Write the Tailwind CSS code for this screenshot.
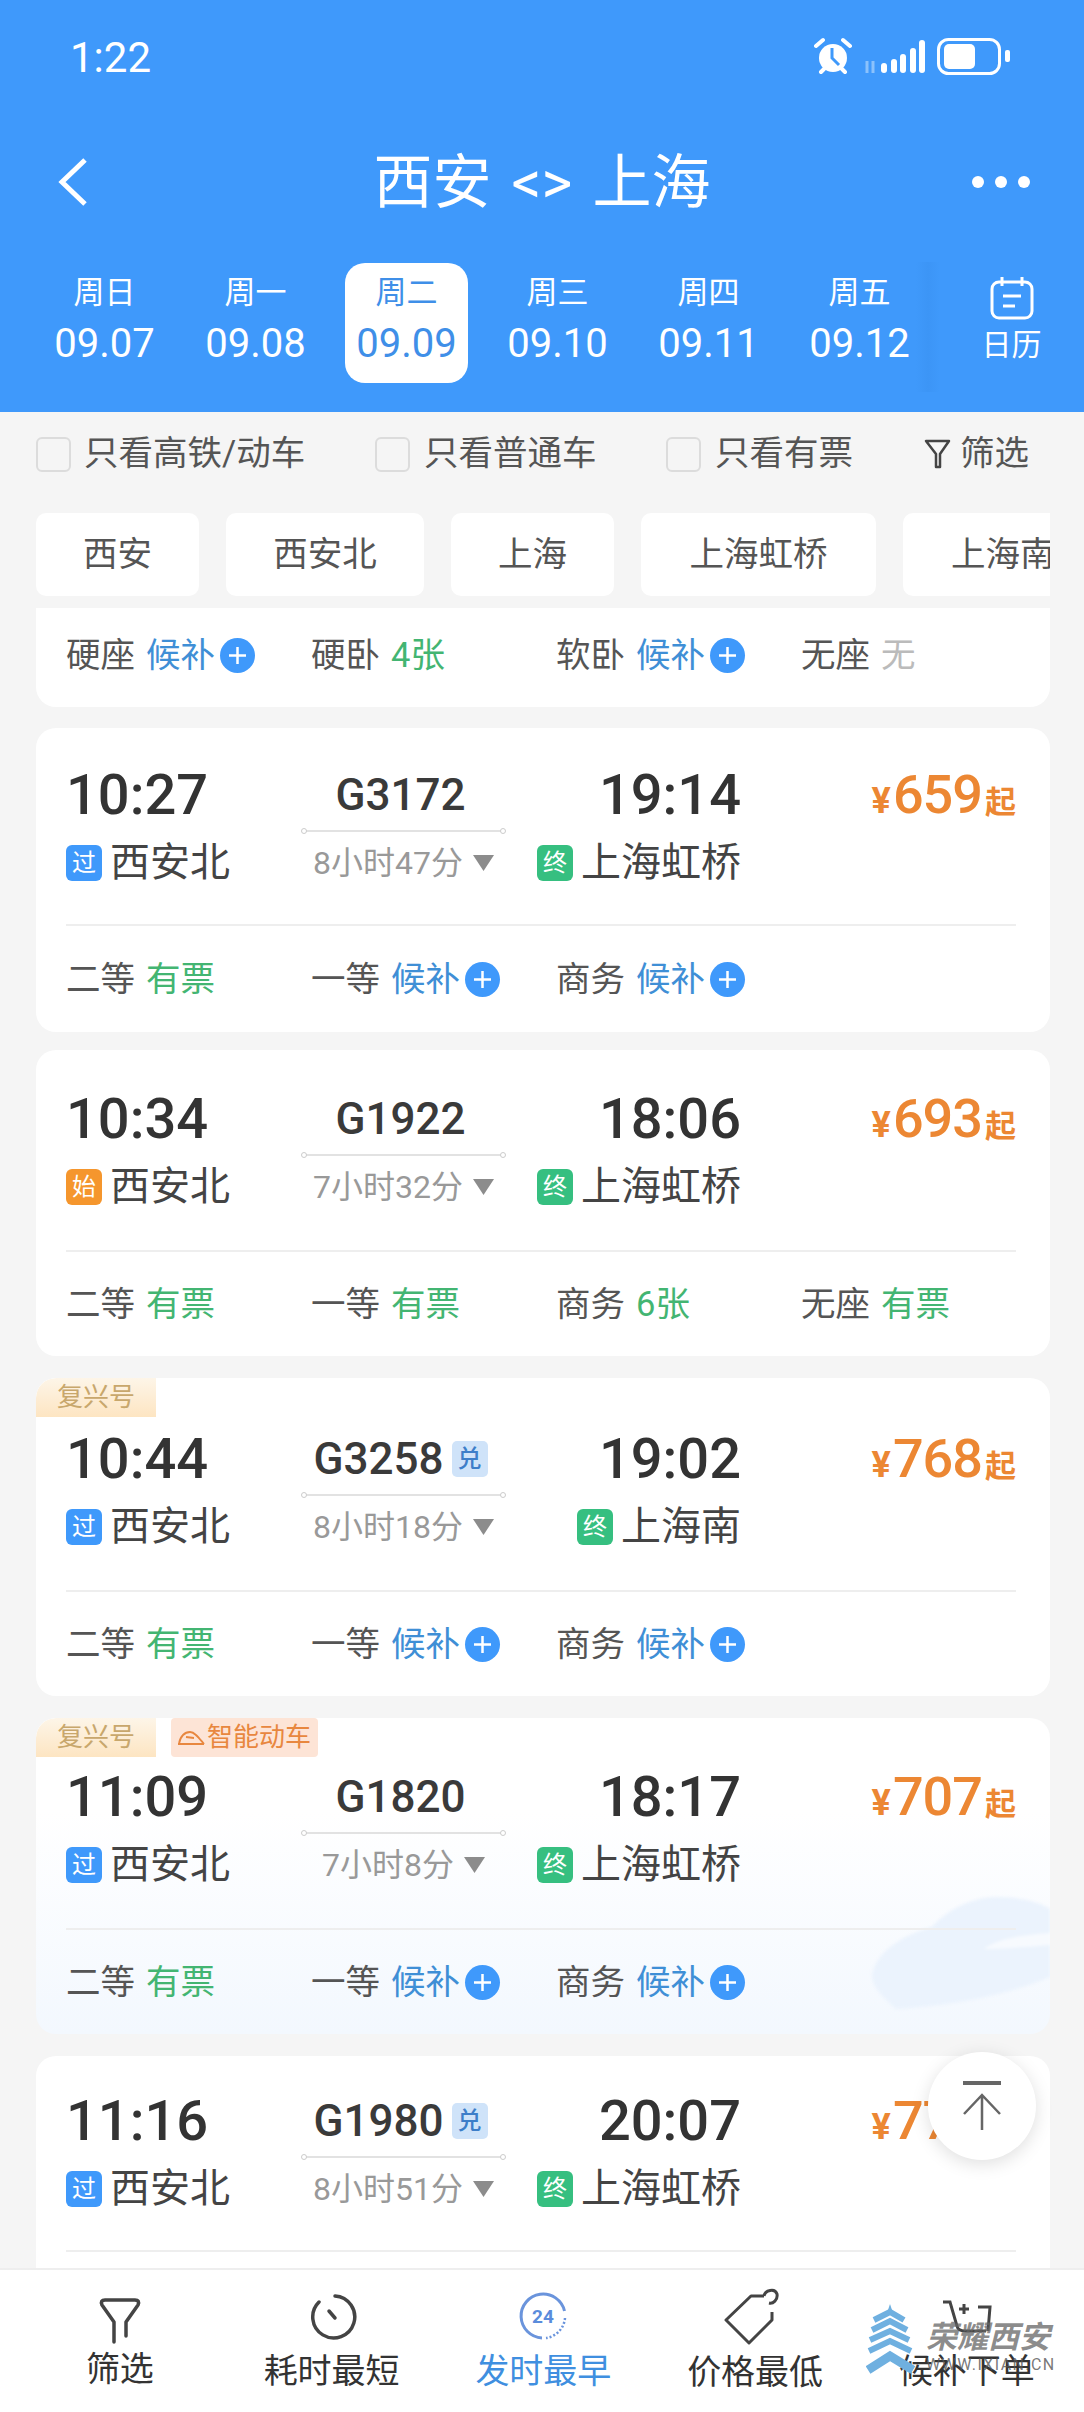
<!DOCTYPE html>
<html>
  <head>
    <meta charset="utf-8" />
    <title>西安 上海</title>
    <script src="https://cdn.jsdelivr.net/npm/@tailwindcss/browser@4"></script>
  </head>
  <body class="bg-[#f5f5f5]">
    <div class="relative w-[1084px] h-[2412px] overflow-hidden flex flex-col bg-[#f5f5f5] text-[#444] font-['Roboto','Noto_Sans_CJK_SC',sans-serif]">
      <!-- Blue header -->
      <header class="h-[412px] shrink-0 bg-[#3f99fb] text-white">
        <div class="h-[114px] flex items-center justify-between pl-[70px] pr-[74px]">
          <span class="text-[42px]">1:22</span>
          <svg class="w-[196px] h-[40px]" viewBox="814 36 196 40" fill="none">
            <circle cx="833" cy="57" r="14" fill="#fff" />
            <path d="M832 47v10l7 7" stroke="#3f99fb" stroke-width="3" />
            <path d="M816 45l7-6M850 45l-7-6M821 71l3-3M845 71l-3-3" stroke="#fff" stroke-width="4" stroke-linecap="round" />
            <path d="M867 60v12M873 72V60" stroke="#fff" stroke-opacity=".4" stroke-width="3" />
            <g fill="#fff">
              <rect x="881" y="62" width="6" height="10" rx="3" />
              <rect x="891" y="58" width="6" height="14" rx="3" />
              <rect x="900" y="53" width="6" height="19" rx="3" />
              <rect x="910" y="47" width="6" height="25" rx="3" />
              <rect x="919" y="39" width="6" height="33" rx="3" />
            </g>
            <rect x="938.5" y="38.5" width="61" height="34" rx="10" stroke="#fff" stroke-width="3" />
            <rect x="944" y="43" width="31" height="25" rx="5" fill="#fff" />
            <rect x="1005" y="49" width="5" height="12" rx="2" fill="#fff" />
          </svg>
        </div>
        <div class="mt-[22px] h-[92px] grid grid-cols-[1fr_auto_1fr] items-center">
          <div class="pl-[57px]">
            <svg class="w-[31px] h-[48px]" viewBox="0 0 31 48" fill="none" stroke="#fff" stroke-width="5"><path d="M28 2L5 24l23 22" /></svg>
          </div>
          <div class="text-[59px] leading-none whitespace-nowrap">西安<span class="mx-[20px]">&lt;&gt;</span>上海</div>
          <div class="flex justify-end gap-[11px] pr-[54px]">
            <span class="w-[12px] h-[12px] rounded-full bg-white"></span>
            <span class="w-[12px] h-[12px] rounded-full bg-white"></span>
            <span class="w-[12px] h-[12px] rounded-full bg-white"></span>
          </div>
        </div>
        <div class="mt-[35px] pl-[29px] flex">
          <div id="dates" class="flex"></div>
          <div class="w-[158px] pl-[4px] flex flex-col items-center">
            <svg class="mt-[13px] w-[44px] h-[44px]" viewBox="0 0 44 44" fill="none" stroke="#fff" stroke-width="3">
              <rect x="2" y="6" width="40" height="36" rx="7" />
              <path d="M12 1v9M32 1v9M13 20h18M13 30h12" />
            </svg>
            <span class="mt-[5px] text-[30px] leading-[40px]">日历</span>
          </div>
        </div>
      </header>
      <div class="absolute left-[916px] top-[262px] w-[24px] h-[130px] bg-gradient-to-r from-[#3f99fb] via-[#3c95f6] to-[#3f99fb]"></div>

      <!-- Filters -->
      <div class="h-[84px] shrink-0 pl-[36px] flex items-center text-[34.5px] text-[#555]">
        <span class="w-[35px] h-[35px] rounded-[6px] border-2 border-[#dcdcdc]"></span>
        <span class="ml-[13px] w-[291px]">只看高铁/动车</span>
        <span class="w-[35px] h-[35px] rounded-[6px] border-2 border-[#dcdcdc]"></span>
        <span class="ml-[14px] w-[242px]">只看普通车</span>
        <span class="w-[35px] h-[35px] rounded-[6px] border-2 border-[#dcdcdc]"></span>
        <span class="ml-[14px] w-[209px]">只看有票</span>
        <svg class="w-[27px] h-[30px] mr-[9px]" viewBox="0 0 27 30" fill="none" stroke="#444" stroke-width="2.5" stroke-linejoin="round">
          <path d="M2 2h23l-9 13v13h-4V15z" />
        </svg>
        <span>筛选</span>
      </div>

      <!-- Stations and trains -->
      <main class="flex-1 min-h-0 overflow-hidden pl-[36px] pr-[34px]">
        <div class="mt-[17px] h-[83px] flex gap-[27px] overflow-hidden text-[34.5px] text-[#555]">
          <div class="w-[163px] shrink-0 rounded-[10px] bg-white flex items-center justify-center">西安</div>
          <div class="w-[198px] shrink-0 rounded-[10px] bg-white flex items-center justify-center">西安北</div>
          <div class="w-[163px] shrink-0 rounded-[10px] bg-white flex items-center justify-center">上海</div>
          <div class="w-[235px] shrink-0 rounded-[10px] bg-white flex items-center justify-center">上海虹桥</div>
          <div class="w-[200px] shrink-0 rounded-[10px] bg-white pl-[48px] flex items-center whitespace-nowrap">上海南</div>
        </div>
        <div class="mt-[12px] h-[99px] rounded-b-[20px] bg-white pl-[30px] pt-[25px]">
          <div id="partialSeats" class="grid grid-cols-[245px_245px_245px_auto]"></div>
        </div>
        <div id="trains"></div>
      </main>

      <!-- Bottom sort bar -->
      <nav class="h-[144px] shrink-0 pl-[14px] bg-white border-t-2 border-[#eeeeee] grid grid-cols-[repeat(5,211.75px)] text-[34px] text-[#333]">
        <div class="flex flex-col items-center">
          <svg class="mt-[28px] w-[44px] h-[46px]" viewBox="0 0 44 46" fill="none" stroke="#444" stroke-width="3.5" stroke-linejoin="round" stroke-linecap="round">
            <path d="M16 44V24L4 7Q2 2 7 2H37Q42 2 40 7L28 24V38" />
          </svg>
          <span class="mt-[2px] leading-[46px]">筛选</span>
        </div>
        <div class="flex flex-col items-center">
          <svg class="mt-[22px] ml-[4px] w-[48px] h-[48px]" viewBox="0 0 48 48" fill="none" stroke="#444" stroke-width="3.5" stroke-linecap="round">
            <path d="M25 4a21 21 0 1 1-16 6" />
            <path d="M19 19l6 7" />
          </svg>
          <span class="mt-[8px] leading-[46px]">耗时最短</span>
        </div>
        <div class="flex flex-col items-center text-[#3f8fe0]">
          <svg class="mt-[21px] w-[50px] h-[50px]" viewBox="0 0 50 50" fill="none">
            <path d="M46.500 20A22 22 0 1 0 24 47" stroke="#6a94dc" stroke-width="3" />
            <path d="M47 27A22 22 0 0 1 28 47" stroke="#6a94dc" stroke-width="2.500" stroke-dasharray="2 2" />
            <text x="25" y="32" text-anchor="middle" font-size="19" font-weight="700" fill="#5a8cdc">24</text>
          </svg>
          <span class="mt-[7px] leading-[46px]">发时最早</span>
        </div>
        <div class="flex flex-col items-center">
          <svg class="mt-[18px] mr-[6px] w-[66px] h-[60px]" viewBox="0 0 66 60" fill="none" stroke="#444" stroke-width="3" stroke-linejoin="round">
            <path d="M45 8H32L7 32l23 23 23-23v-8" />
            <path d="M45 8c1-6 11-8 13-2 1 6-4 10-8 9" />
          </svg>
          <span class="leading-[46px] mt-[1px]">价格最低</span>
        </div>
        <div class="flex flex-col items-center">
          <svg class="mt-[28px] w-[50px] h-[38px]" viewBox="0 0 50 38" fill="none" stroke="#444" stroke-width="3">
            <path d="M1 4h7l7 24q1 5 8 5h21M46 33l2-24V9H36" />
            <path d="M22 6v10M17 11h10" />
          </svg>
          <span class="mt-[12px] leading-[46px]">候补下单</span>
        </div>
      </nav>

      <!-- Floating back to top -->
      <button class="absolute left-[928px] top-[2052px] w-[108px] h-[108px] rounded-full bg-white shadow-[0_4px_18px_rgba(0,0,0,0.13)] flex items-center justify-center">
        <svg class="w-[40px] h-[50px]" viewBox="0 0 40 50" fill="none" stroke="#666">
          <path d="M1 2h38" stroke-width="4" />
          <path d="M20 49V14M2 33l18-19 18 19" stroke-width="2.500" />
        </svg>
      </button>

      <!-- Watermark -->
      <svg class="absolute left-[866px] top-[2304px] w-[50px] h-[72px]" viewBox="0 0 50 72" fill="none" stroke="#6fb0e0" stroke-width="6">
        <path d="M24 0l-2 6h4z" fill="#6fb0e0" stroke="none" />
        <path d="M8 16l16-8 14 8M6 26l18-9 17 9M4 36l20-9 19 9M3 47l21-10 21 10" />
        <path d="M2 66l22-14 23 14" stroke-width="9" />
      </svg>
      <div class="absolute left-[926px] top-[2316px] text-[31px] leading-[44px] font-bold italic whitespace-nowrap text-[#666]/75">荣耀西安</div>
      <div class="absolute left-[926px] top-[2355px] text-[16px] leading-[20px] tracking-[1.4px] whitespace-nowrap text-[#555]/80">WWW.IXIAN.CN</div>
    </div>

    <script>
      const dates = [
        ["周日", "09.07"],
        ["周一", "09.08"],
        ["周二", "09.09", true],
        ["周三", "09.10"],
        ["周四", "09.11"],
        ["周五", "09.12"],
      ];
      document.getElementById("dates").innerHTML = dates
        .map(
          ([week, day, active]) => `
          <div class="w-[151px] flex justify-center">
            <div class="w-[123px] h-[120px] rounded-[20px] pt-[10px] flex flex-col items-center ${active ? "bg-white text-[#3f8fe8]" : ""}">
              <span class="h-[40px] text-[31px] leading-[40px]">${week}</span>
              <span class="mt-[10px] h-[42px] text-[40px] leading-[42px]">${day}</span>
            </div>
          </div>`
        )
        .join("");

      // status: wait = 候补 + plus, ok = green, none = grey
      function seat([label, status, text]) {
        let value = "";
        if (status === "wait") {
          value = `<span class="text-[#3f8fd6]">候补</span>
            <span class="ml-[5px] w-[35px] h-[35px] rounded-full bg-[#3f99fb] flex items-center justify-center">
              <svg class="w-[19px] h-[19px]" viewBox="0 0 19 19" stroke="#fff" stroke-width="2.500"><path d="M9.500 1v17M1 9.500h17" /></svg>
            </span>`;
        } else if (status === "ok") {
          value = `<span class="text-[#43b572]">${text}</span>`;
        } else {
          value = `<span class="text-[#bbbbbb]">${text}</span>`;
        }
        return `<div class="flex items-center text-[34.5px] leading-[44px] text-[#555]"><span class="mr-[11px]">${label}</span>${value}</div>`;
      }

      document.getElementById("partialSeats").innerHTML = [
        ["硬座", "wait"],
        ["硬卧", "ok", "4张"],
        ["软卧", "wait"],
        ["无座", "none", "无"],
      ]
        .map(seat)
        .join("");

      const usual = [
        ["二等", "ok", "有票"],
        ["一等", "wait"],
        ["商务", "wait"],
      ];
      const trains = [
        { box: "mt-[21px] pt-[34px] bg-white", rule: "mt-[30px] h-[108px]", from: "10:27", no: "G3172", to: "19:14", fromBadge: "过", fromName: "西安北", toName: "上海虹桥", time: "8小时47分", price: "659", seats: usual },
        {
          box: "mt-[18px] pt-[36px] bg-white", rule: "mt-[32px] h-[106px]", from: "10:34", no: "G1922", to: "18:06", fromBadge: "始", fromName: "西安北", toName: "上海虹桥", time: "7小时32分", price: "693",
          seats: [["二等", "ok", "有票"], ["一等", "ok", "有票"], ["商务", "ok", "6张"], ["无座", "ok", "有票"]],
        },
        { box: "mt-[22px] pt-[48px] bg-white", rule: "mt-[32px] h-[106px]", fx: true, from: "10:44", no: "G3258", dui: true, to: "19:02", fromBadge: "过", fromName: "西安北", toName: "上海南", time: "8小时18分", price: "768", seats: usual },
        { box: "mt-[22px] pt-[46px] bg-gradient-to-b from-white from-30% to-[#f3f8fe]", rule: "mt-[32px] h-[106px]", fx: true, smart: true, from: "11:09", no: "G1820", to: "18:17", fromBadge: "过", fromName: "西安北", toName: "上海虹桥", time: "7小时8分", price: "707", seats: usual },
        { box: "mt-[22px] pt-[32px] bg-white", rule: "mt-[30px] h-[108px]", from: "11:16", no: "G1980", dui: true, to: "20:07", fromBadge: "过", fromName: "西安北", toName: "上海虹桥", time: "8小时51分", price: "771", seats: [] },
      ];

      document.getElementById("trains").innerHTML = trains
        .map(
          (t) => `
        <div class="relative overflow-hidden rounded-[20px] pl-[30px] pr-[34px] ${t.box}">
          ${t.fx ? `<div class="absolute left-0 top-0 w-[120px] h-[39px] rounded-tl-[20px] bg-gradient-to-b from-[#fdf5e8] to-[#fde5c2] text-[#c8a76c] text-[26px] leading-[39px] text-center">复兴号</div>` : ""}
          ${t.smart ? `<div class="absolute left-[135px] top-0 w-[147px] h-[39px] rounded-[4px] bg-[#fde4d6] text-[#e8873f] text-[26px] leading-[39px] flex items-center pl-[6px]">
              <svg class="w-[28px] h-[14px] mr-[2px]" viewBox="0 0 28 14" fill="none" stroke="#e8873f" stroke-width="1.800"><path d="M1 13h26M2 13C3 5 8 1 13 1c5 0 9 6 14 12M9 6l8 1" /></svg>智能动车</div>` : ""}
          ${t.smart ? `<svg class="absolute right-0 bottom-[25px] w-[178px] h-[112px] blur-[1.5px]" viewBox="0 0 178 112"><path d="M0 78C4 55 30 38 60 30 70 18 95 0 125 0c25 0 45 6 53 12v68c-38 16-88 28-154 32C10 100 0 90 0 78z" fill="#ebf3fd" /><path d="M112 52c13-10 38-14 66-16v12c-23 2-48 4-66 4z" fill="#f7fafe" /></svg>` : ""}
          <div class="relative grid grid-cols-[238px_199px_238px_1fr] h-[64px] items-center">
            <div class="text-[56px] leading-[64px] font-medium text-[#333]">${t.from}</div>
            <div class="pr-[6px] flex items-center justify-center gap-[8px] text-[44px] font-medium text-[#3a3a3a]">
              <span>${t.no}</span>
              ${t.dui ? `<span class="w-[36px] h-[36px] rounded-[5px] bg-[#cfe3f9] text-[#3d7ec9] text-[24px] leading-[36px] text-center">兑</span>` : ""}
            </div>
            <div class="text-right text-[56px] leading-[64px] font-medium text-[#333]">${t.to}</div>
            <div class="flex items-baseline justify-end text-[#ec8733] font-medium">
              <span class="text-[36px] font-bold mr-[2px]">¥</span><span class="text-[54px] leading-[64px] tracking-[-1px]">${t.price}</span><span class="ml-[3px] text-[31px] font-bold">起</span>
            </div>
          </div>
          <div class="relative mt-[4px] grid grid-cols-[238px_199px_238px] h-[64px] items-center">
            <div class="pt-[2px] flex items-center gap-[8px] text-[40px] text-[#444]">
              <span class="w-[36px] h-[36px] rounded-[6px] ${t.fromBadge === "始" ? "bg-[#f5962d]" : "bg-[#3f99fb]"} text-white text-[24px] leading-[36px] text-center">${t.fromBadge}</span>
              <span>${t.fromName}</span>
            </div>
            <div class="relative h-full flex items-center justify-center gap-[10px] text-[32px] text-[#999999] border-t-2 border-[#e2e2e2]">
              <span class="absolute left-[-3px] top-[-4px] w-[6px] h-[6px] rounded-full bg-white border border-[#cccccc]"></span>
              <span class="absolute right-[-3px] top-[-4px] w-[6px] h-[6px] rounded-full bg-white border border-[#cccccc]"></span>
              <span>${t.time}</span>
              <svg class="w-[21px] h-[16px]" viewBox="0 0 21 16"><path d="M0 0h21L10.500 16z" fill="#8c8c8c" /></svg>
            </div>
            <div class="pt-[2px] flex items-center justify-end gap-[8px] text-[40px] text-[#444]">
              <span class="w-[36px] h-[36px] rounded-[6px] bg-[#36bf80] text-white text-[24px] leading-[36px] text-center">终</span>
              <span>${t.toName}</span>
            </div>
          </div>
          <div class="relative ${t.rule} border-t-2 border-[#eeeeee] grid grid-cols-[245px_245px_245px_auto] items-center">
            ${t.seats.map(seat).join("")}
          </div>
        </div>`
        )
        .join("");
    </script>
  </body>
</html>
